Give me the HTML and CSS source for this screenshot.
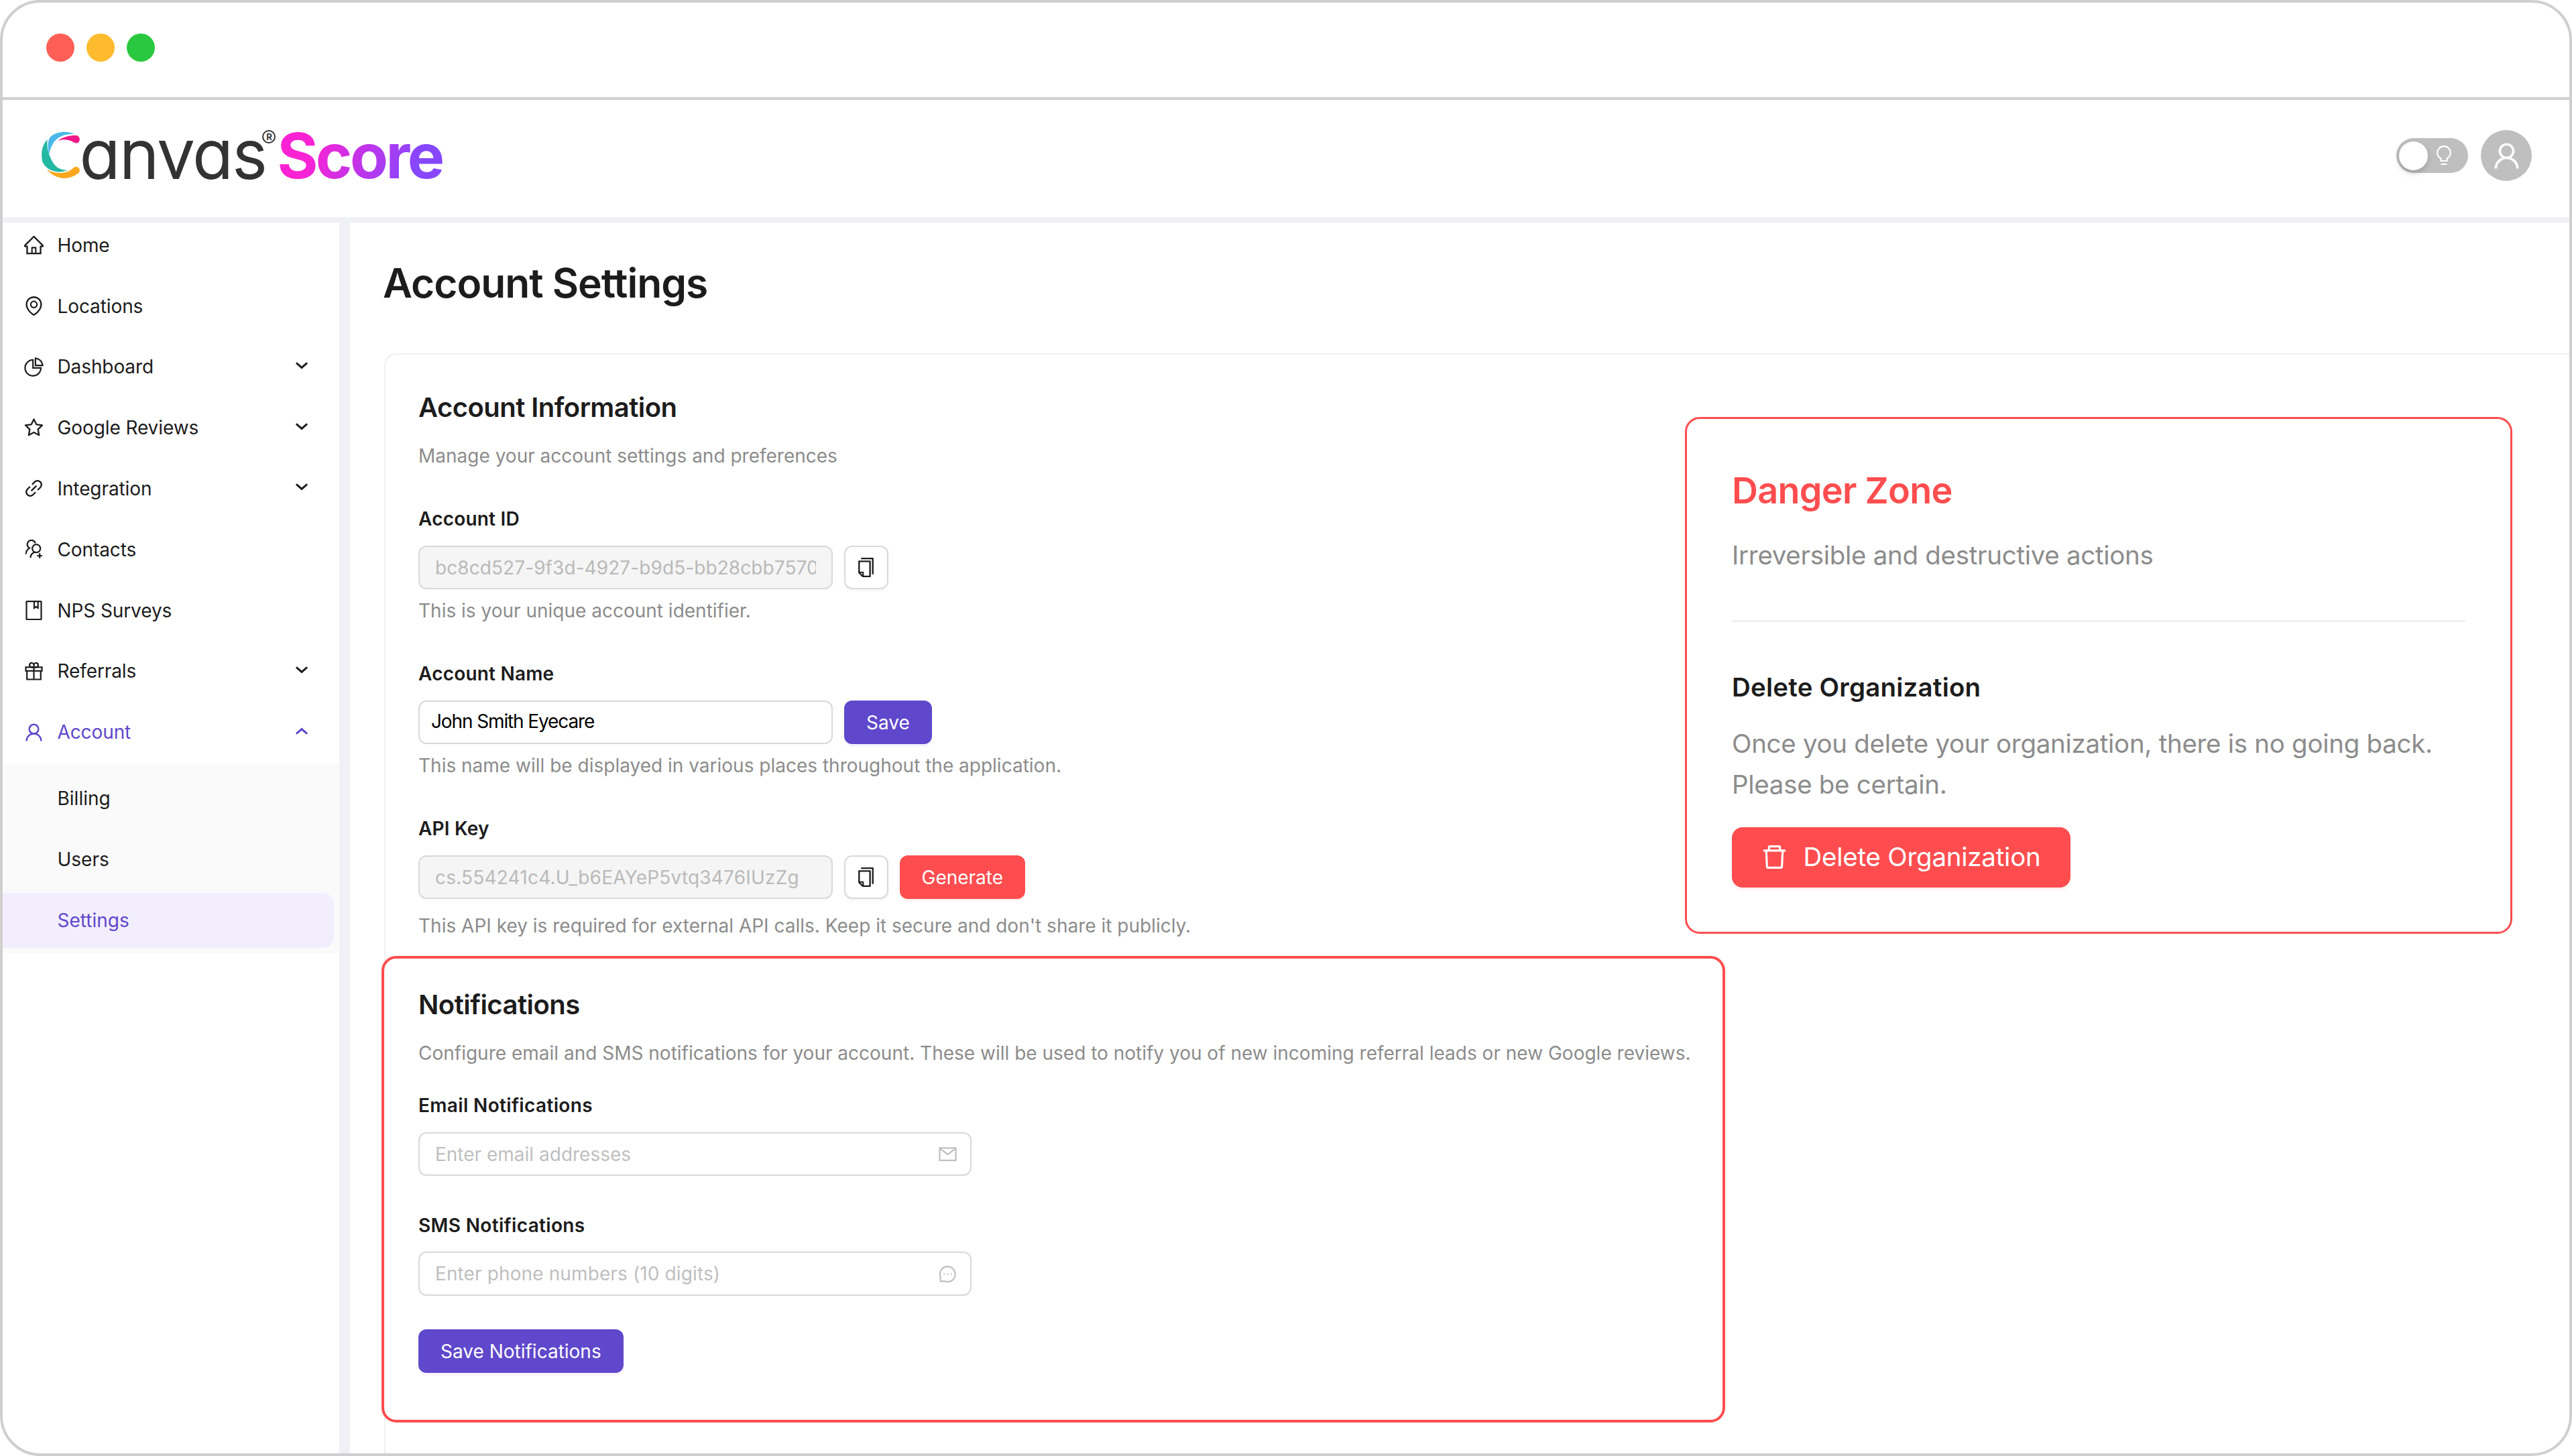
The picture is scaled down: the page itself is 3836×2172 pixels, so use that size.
FILE: index.html
```html
<!DOCTYPE html>
<html lang="en">
<head>
    <meta charset="UTF-8">
    <meta name="viewport" content="width=device-width, initial-scale=1.0">
    <title>Account Settings - Canvas Score</title>
    <link rel="stylesheet" href="styles.css">
</head>
<body>
    <!-- Shared icons -->
    <svg class="sprite" aria-hidden="true">
        <symbol id="i-user" viewBox="64 64 896 896"><path d="M858.5 763.6a374 374 0 0 0-80.6-119.5 375.63 375.63 0 0 0-119.5-80.6c-.4-.2-.8-.3-1.2-.5C719.5 518 760 444.7 760 362c0-137-111-248-248-248S264 225 264 362c0 82.7 40.5 156 102.8 201.1-.4.2-.8.3-1.2.5-44.8 18.9-85 46-119.5 80.6a375.63 375.63 0 0 0-80.6 119.5A371.7 371.7 0 0 0 136 901.8a8 8 0 0 0 8 8.2h60c4.4 0 7.9-3.5 8-7.8 2-77.2 33-149.5 87.8-204.3 56.7-56.7 132-87.9 212.2-87.9s155.5 31.2 212.2 87.9C779 752.7 810 825 812 902.2c.1 4.4 3.6 7.8 8 7.8h60a8 8 0 0 0 8-8.2c-1-47.8-10.9-94.3-29.5-138.2zM512 534c-45.9 0-89.1-17.9-121.6-50.4S340 407.9 340 362c0-45.9 17.9-89.1 50.4-121.6S466.1 190 512 190s89.1 17.9 121.6 50.4S684 316.1 684 362c0 45.9-17.9 89.1-50.4 121.6S557.9 534 512 534z"/></symbol>
        <symbol id="i-copy" viewBox="64 64 896 896"><path d="M832 64H296c-4.400 0-8 3.600-8 8v56c0 4.400 3.600 8 8 8h496v688c0 4.400 3.600 8 8 8h56c4.400 0 8-3.600 8-8V96c0-17.700-14.300-32-32-32zM704 192H192c-17.700 0-32 14.300-32 32v530.700c0 8.500 3.400 16.600 9.400 22.600l173.300 173.300c2.200 2.200 4.700 4 7.400 5.500v1.900h4.200c3.500 1.300 7.200 2 11 2H704c17.700 0 32-14.300 32-32V224c0-17.700-14.300-32-32-32zM350 856.200L263.900 770H350v86.200zM664 888H414V746c0-22.100-17.900-40-40-40H232V264h432v624z"/></symbol>
        <symbol id="i-arrow" viewBox="0 0 18 11"><path d="M1.800 2.200 9 8.400 16.200 2.200" fill="none" stroke="currentColor" stroke-width="3" stroke-linecap="round"/></symbol>
    </svg>

    <div class="window">
        <div class="titlebar">
            <span class="dot red"></span>
            <span class="dot yellow"></span>
            <span class="dot green"></span>
        </div>

        <header class="header">
            <div class="logo">
                <svg class="logo-c" viewBox="36 50 169 208">
                    <path fill="#4ab8ea" d="M68 150C62 112 63 88 76 73C102 50 150 45 182 62C130 58 82 80 70 150z"/>
                    <path fill="#ee1889" d="M108 92C130 72 170 66 192 68C206 72 208 90 200 98C190 106 180 100 170 94C150 84 130 84 108 92z"/>
                    <path fill="#22b8a2" d="M62 86C32 116 34 160 40 185C58 225 110 240 150 222C112 220 92 205 77 170C64 145 58 115 62 86z"/>
                    <path fill="#fba61c" d="M58 218C90 238 130 238 155 227C175 218 178 206 190 207C206 210 208 226 200 234C180 250 160 256 138 258C108 257 80 244 58 218z"/>
                </svg>
                <span class="logo-canvas">anvas</span>
                <span class="logo-reg">R</span>
                <span class="logo-score">Score</span>
            </div>
            <div class="header-tools">
                <div class="switch">
                    <span class="knob"></span>
                    <svg class="bulb line" viewBox="0 0 22 30">
                        <path d="M6.500 23V19.500C3 17.500 1.200 14.500 1.200 11a9.800 9.800 0 0 1 19.600 0C20.800 14.500 19 17.500 15.500 19.500V23z"/>
                        <path d="M6.500 28h9"/>
                    </svg>
                </div>
                <div class="avatar"><svg><use href="#i-user"/></svg></div>
            </div>
        </header>

        <div class="layout">
            <nav class="sidebar">
                <a class="item">
                    <svg class="icon" viewBox="64 64 896 896"><path d="M946.500 505L560.100 118.800l-25.900-25.900a31.500 31.500 0 0 0-44.400 0L77.500 505a63.900 63.900 0 0 0-18.800 46c.4 35.200 29.700 63.300 64.900 63.300h42.500V940h691.800V614.300h43.400c17.100 0 33.200-6.700 45.300-18.800a63.600 63.600 0 0 0 18.700-45.300c0-17-6.700-33.100-18.800-45.200zM568 868H456V664h112v204zm217.900-325.700V868H632V640c0-22.100-17.900-40-40-40H432c-22.100 0-40 17.900-40 40v228H238.100V542.300h-96l370-369.700 23.100 23.100L882 542.300h-96.100z"/></svg>
                    <span>Home</span>
                </a>
                <a class="item">
                    <svg class="icon" viewBox="64 64 896 896"><path d="M854.600 289.100a362.490 362.490 0 0 0-79.900-115.700 370.830 370.830 0 0 0-118.200-77.800C610.700 76.600 562.100 67 512 67c-50.100 0-98.700 9.600-144.500 28.500-44.300 18.300-84 44.500-118.200 77.800A363.600 363.600 0 0 0 169.400 289c-19.500 45-29.400 92.800-29.400 142 0 70.600 16.900 140.900 50.100 208.700 26.700 54.500 64 107.600 111 158.100 80.300 86.200 164.500 138.900 188.400 153a43.900 43.900 0 0 0 22.400 6.100c7.800 0 15.500-2 22.400-6.100 23.900-14.100 108.100-66.800 188.400-153 47-50.400 84.300-103.600 111-158.100C867.100 572 884 501.800 884 431.100c0-49.200-9.900-97-29.400-142zM512 880.200c-65.900-41.900-300-207.800-300-449.100 0-77.900 31.100-151.100 87.600-206.300C356.300 169.500 431.700 139 512 139s155.700 30.500 212.400 85.900C780.900 280 812 353.200 812 431.100c0 241.300-234.100 407.200-300 449.100zm0-617.200c-97.200 0-176 78.800-176 176s78.800 176 176 176 176-78.800 176-176-78.800-176-176-176zm79.200 255.200A111.600 111.600 0 0 1 512 551c-29.900 0-58-11.700-79.200-32.800A111.600 111.600 0 0 1 400 439c0-29.900 11.700-58 32.800-79.200C454 338.600 482.100 327 512 327c29.900 0 58 11.600 79.200 32.800C612.400 381 624 409.100 624 439c0 29.900-11.600 58-32.800 79.200z"/></svg>
                    <span>Locations</span>
                </a>
                <a class="item">
                    <svg class="icon" viewBox="64 64 896 896"><path d="M864 518H506V160c0-4.400-3.600-8-8-8h-26a398.460 398.460 0 0 0-282.800 117.100 398.190 398.190 0 0 0-85.700 127.100A397.610 397.610 0 0 0 72 552a398.460 398.460 0 0 0 117.100 282.800c36.700 36.700 79.500 65.600 127.100 85.700A397.610 397.610 0 0 0 472 952a398.460 398.460 0 0 0 282.800-117.100c36.700-36.700 65.600-79.500 85.700-127.100A397.610 397.610 0 0 0 872 552v-26c0-4.400-3.600-8-8-8zM705.700 787.800A331.590 331.590 0 0 1 470.400 884c-88.100-.4-170.900-34.900-233.200-97.200C174.500 724.100 140 640.700 140 552c0-88.700 34.500-172.100 97.200-234.800 54.600-54.600 124.900-87.900 200.800-95.500V586h364.300c-7.700 76.300-41.300 147-96.600 201.800zM952 462.400l-2.600-28.200c-8.500-92.100-49.400-179-115.200-244.600A399.400 399.400 0 0 0 589 74.600L560.700 72c-4.700-.4-8.700 3.200-8.700 7.900V464c0 4.400 3.600 8 8 8l384-1c4.700 0 8.400-4 8-8.600zm-332.200-58.200V147.600a332.240 332.240 0 0 1 166.400 89.800c45.700 45.600 77 103.600 90 166.100l-256.400.7z"/></svg>
                    <span>Dashboard</span>
                    <svg class="arrow"><use href="#i-arrow"/></svg>
                </a>
                <a class="item">
                    <svg class="icon" viewBox="64 64 896 896"><path d="M908.100 353.100l-253.900-36.900L540.700 86.100c-3.100-6.300-8.200-11.400-14.500-14.500-15.800-7.800-35-1.300-42.900 14.500L369.800 316.200l-253.900 36.900c-7 1-13.400 4.300-18.300 9.300a32.050 32.050 0 0 0 .6 45.300l183.700 179.100-43.400 252.900a31.950 31.950 0 0 0 46.400 33.700L512 754l227.100 119.400c6.200 3.300 13.400 4.400 20.300 3.200 17.400-3 29.100-19.500 26.100-36.900l-43.400-252.900 183.700-179.100c5-4.900 8.300-11.300 9.300-18.300 2.700-17.500-9.500-33.700-27-36.300zM664.800 561.600l36.100 210.300L512 672.700 323.100 772l36.100-210.300-152.800-149L417.600 382 512 190.700 606.400 382l211.200 30.700-152.800 148.900z"/></svg>
                    <span>Google Reviews</span>
                    <svg class="arrow"><use href="#i-arrow"/></svg>
                </a>
                <a class="item">
                    <svg class="icon" viewBox="64 64 896 896"><path d="M574 665.400a8.030 8.030 0 0 0-11.300 0L446.500 781.600c-53.800 53.800-144.600 59.500-204 0-59.500-59.500-53.800-150.200 0-204l116.200-116.200c3.100-3.100 3.100-8.200 0-11.300l-39.800-39.800a8.030 8.030 0 0 0-11.300 0L191.400 526.500c-84.600 84.600-84.600 221.500 0 306s221.500 84.600 306 0l116.200-116.200c3.100-3.100 3.100-8.200 0-11.300L574 665.400zm258.600-474c-84.600-84.600-221.500-84.600-306 0L410.300 307.600a8.030 8.030 0 0 0 0 11.300l39.700 39.700c3.100 3.100 8.200 3.100 11.300 0l116.200-116.200c53.800-53.800 144.600-59.500 204 0 59.500 59.500 53.800 150.200 0 204L665.300 562.600a8.030 8.030 0 0 0 0 11.300l39.800 39.800c3.100 3.100 8.200 3.100 11.300 0l116.200-116.200c84.500-84.600 84.500-221.500 0-306.100zM610.100 372.300a8.030 8.030 0 0 0-11.300 0L372.300 598.700a8.030 8.030 0 0 0 0 11.300l39.600 39.600c3.100 3.100 8.200 3.100 11.300 0l226.400-226.400c3.100-3.100 3.100-8.200 0-11.300l-39.500-39.600z"/></svg>
                    <span>Integration</span>
                    <svg class="arrow"><use href="#i-arrow"/></svg>
                </a>
                <a class="item">
                    <svg class="icon line" viewBox="0 0 29 29">
                        <path d="M16.800 5.200A6.200 6.200 0 1 0 8 12.600C4.800 14.300 2.900 17.200 2.700 21.500"/>
                        <circle cx="18.200" cy="13.200" r="6"/>
                        <path d="M16 18.800C12 20 9.600 23 9.400 27"/>
                        <path d="M19.300 24h7.700M23.200 20.200v7.600"/>
                    </svg>
                    <span>Contacts</span>
                </a>
                <a class="item">
                    <svg class="icon line" viewBox="0 0 29 29">
                        <rect x="3.500" y="1.200" width="22" height="26.800" rx="0.600"/>
                        <path d="M15 1.500V11l2.800-2 2.900 2V1.500"/>
                    </svg>
                    <span>NPS Surveys</span>
                </a>
                <a class="item">
                    <svg class="icon line" viewBox="0 0 29 29">
                        <rect x="2.500" y="8.300" width="24" height="5.500"/>
                        <path d="M4.200 13.800V26.500h20.600V13.800M14.500 8.300v18.200"/>
                        <path d="M14.500 8.300H10.600a3.200 3.200 0 1 1 3.900-3.100zM14.500 8.300h3.900a3.200 3.200 0 1 0-3.900-3.100z"/>
                    </svg>
                    <span>Referrals</span>
                    <svg class="arrow"><use href="#i-arrow"/></svg>
                </a>
                <a class="item open">
                    <svg class="icon"><use href="#i-user"/></svg>
                    <span>Account</span>
                    <svg class="arrow"><use href="#i-arrow"/></svg>
                </a>
                <div class="submenu">
                    <a class="subitem">Billing</a>
                    <a class="subitem">Users</a>
                    <a class="subitem active">Settings</a>
                </div>
            </nav>

            <main class="main">
                <h1>Account Settings</h1>

                <div class="card">
                    <div class="card-top">
                        <section class="info">
                            <h2>Account Information</h2>
                            <p class="desc">Manage your account settings and preferences</p>

                            <div class="field">
                                <label>Account ID</label>
                                <div class="row">
                                    <input class="input" type="text" value="bc8cd527-9f3d-4927-b9d5-bb28cbb7570a" disabled>
                                    <button class="btn copy"><svg><use href="#i-copy"/></svg></button>
                                </div>
                                <p class="help">This is your unique account identifier.</p>
                            </div>

                            <div class="field">
                                <label>Account Name</label>
                                <div class="row">
                                    <input class="input name" type="text" value="John Smith Eyecare">
                                    <button class="btn primary">Save</button>
                                </div>
                                <p class="help">This name will be displayed in various places throughout the application.</p>
                            </div>

                            <div class="field api">
                                <label>API Key</label>
                                <div class="row">
                                    <input class="input key" type="text" value="cs.554241c4.U_b6EAYeP5vtq3476IUzZg" disabled>
                                    <button class="btn copy"><svg><use href="#i-copy"/></svg></button>
                                    <button class="btn danger">Generate</button>
                                </div>
                                <p class="help">This API key is required for external API calls. Keep it secure and don't share it publicly.</p>
                            </div>
                        </section>

                        <section class="danger-zone">
                            <h2>Danger Zone</h2>
                            <p>Irreversible and destructive actions</p>
                            <hr>
                            <h3>Delete Organization</h3>
                            <p>Once you delete your organization, there is no going back. Please be certain.</p>
                            <button class="btn danger delete">
                                <svg viewBox="64 64 896 896"><path d="M360 184h-8c4.400 0 8-3.600 8-8v8h304v-8c0 4.400 3.600 8 8 8h-8v72h72v-80c0-35.300-28.700-64-64-64H352c-35.300 0-64 28.700-64 64v80h72v-72zm504 72H160c-17.700 0-32 14.300-32 32v32c0 4.400 3.600 8 8 8h60.400l24.700 523c1.600 34.100 29.800 61 63.900 61h454c34.200 0 62.300-26.800 63.900-61l24.700-523H888c4.400 0 8-3.600 8-8v-32c0-17.700-14.300-32-32-32zM731.300 840H292.700l-24.200-512h487l-24.200 512z"/></svg>
                                <span>Delete Organization</span>
                            </button>
                        </section>
                    </div>

                    <section class="notifications">
                        <h2>Notifications</h2>
                        <p class="desc">Configure email and SMS notifications for your account. These will be used to notify you of new incoming referral leads or new Google reviews.</p>

                        <label>Email Notifications</label>
                        <div class="input wide">
                            <input type="text" placeholder="Enter email addresses">
                            <svg class="line" viewBox="0 0 29 29">
                                <rect x="2.500" y="5.500" width="24" height="18.500"/>
                                <path d="M3 6.500l11.500 8.700L26 6.500"/>
                            </svg>
                        </div>

                        <label>SMS Notifications</label>
                        <div class="input wide">
                            <input type="text" class="phone" placeholder="Enter phone numbers (10 digits)">
                            <svg class="line" viewBox="0 0 29 29">
                                <path d="M3.800 25.500V19.300A11.400 11.400 0 1 1 9.700 25.200z"/>
                                <path d="M8.200 14.500h2M13.500 14.500h2M18.800 14.500h2"/>
                            </svg>
                        </div>

                        <button class="btn primary">Save Notifications</button>
                    </section>
                </div>
            </main>
        </div>
    </div>
</body>
</html>
```
FILE: styles.css
```css
* {
    box-sizing: border-box;
}
body {
    margin: 0;
    background-color: #fff;
    font-family: Inter, "Liberation Sans", sans-serif;
    font-size: 28px;
    line-height: 44px;
    color: #1c1c1c;
}
h1, h2, h3, p {
    margin: 0;
}
h1, h2, h3, label {
    font-weight: 600;
}
svg {
    fill: currentColor;
    flex: none;
}
input, button {
    font: inherit;
    color: inherit;
}
.sprite {
    display: none;
}
.line {
    fill: none;
    stroke: currentColor;
    stroke-width: 2.2;
}
.window {
    display: flex;
    flex-direction: column;
    width: 100vw;
    height: 100vh;
    border: 4px solid #cfcfcf;
    border-radius: 60px;
    overflow: hidden;
}

/* Title bar */
.titlebar {
    flex: none;
    display: flex;
    gap: 18px;
    height: 145px;
    padding: 46px 65px;
    border-bottom: 4px solid #cfcfcf;
}
.dot {
    width: 42px;
    height: 42px;
    border-radius: 50%;
}
.red {
    background-color: #ff5f57;
}
.yellow {
    background-color: #febb2e;
}
.green {
    background-color: #2ac840;
}

/* Header */
.header {
    flex: none;
    display: flex;
    justify-content: space-between;
    height: 183px;
    padding: 0 56px 0 58px;
    border-bottom: 8px solid #f0f1f6;
}
.logo {
    display: flex;
    align-items: baseline;
    padding-top: 31px;
}
.logo-c {
    width: 57px;
    height: 70px;
}
.logo-canvas {
    font-size: 100px;
    font-weight: 300;
    line-height: 100px;
    letter-spacing: -0.9px;
    font-feature-settings: "cv11";
    color: #333;
    -webkit-text-stroke: 2px #333;
}
.logo-reg {
    align-self: flex-start;
    width: 20px;
    height: 20px;
    margin: 14px 2px 0 -6px;
    border: 2px solid #333;
    border-radius: 50%;
    font-size: 13px;
    font-weight: 700;
    line-height: 16px;
    text-align: center;
    color: #333;
}
.logo-score {
    font-size: 93px;
    font-weight: 700;
    line-height: 93px;
    letter-spacing: -3.5px;
    color: transparent;
    background: linear-gradient(110deg, #fb22d4 22%, #8647ff 82%);
    -webkit-background-clip: text;
    background-clip: text;
}
.header-tools {
    display: flex;
    align-items: center;
    gap: 19px;
    padding-bottom: 9px;
}
.switch {
    display: flex;
    align-items: center;
    gap: 13px;
    width: 107px;
    height: 52px;
    padding: 0 4px;
    border-radius: 26px;
    background-color: #bfbfbf;
}
.knob {
    width: 43px;
    height: 43px;
    border-radius: 50%;
    background-color: #fff;
    box-shadow: 0 4px 8px rgba(0, 35, 11, 0.2);
}
.bulb {
    width: 22px;
    height: 30px;
    color: #fff;
}
.avatar {
    display: flex;
    align-items: center;
    justify-content: center;
    width: 76px;
    height: 76px;
    border-radius: 50%;
    background-color: #bfbfbf;
    color: #fff;
}
.avatar svg {
    width: 43px;
    height: 43px;
}

/* Sidebar */
.layout {
    flex: 1;
    display: flex;
    min-height: 0;
}
.sidebar {
    flex: none;
    width: 518px;
    border-right: 16px solid #f0f1f6;
}
.item {
    display: flex;
    align-items: center;
    height: 90.8px;
    padding: 0 47px 0 32px;
    letter-spacing: -0.1px;
}
.item:first-child {
    height: 79.2px;
    padding-bottom: 11.6px;
}
.item .icon {
    width: 29px;
    height: 29px;
    margin-right: 20.5px;
}
.arrow {
    width: 18px;
    height: 11px;
    margin: -4px 0 0 auto;
}
.open, .active {
    color: #5f48cb;
}
.open .arrow {
    transform: rotate(180deg);
}
.submenu {
    margin-top: 3px;
    padding: 9px 8px 8px 0;
    background-color: #fafafa;
}
.subitem {
    display: block;
    height: 82px;
    margin-bottom: 9px;
    padding-left: 81.5px;
    line-height: 82px;
}
.subitem:last-child {
    margin-bottom: 0;
}
.active {
    border-radius: 0 16px 16px 0;
    background-color: #f3eefe;
}

/* Content */
.main {
    flex: 1;
    min-width: 0;
    padding: 50px 0 0 51px;
}
h1 {
    margin-left: -2px;
    font-size: 60.5px;
    line-height: 80px;
    letter-spacing: -1.05px;
}
.card {
    height: 1700px;
    margin-top: 65px;
    padding: 49px 0 0 49px;
    border: 2px solid #f0f0f0;
    border-right: 0;
    border-radius: 18px 0 0 0;
}
.card-top {
    display: flex;
    justify-content: space-between;
    align-items: flex-start;
}
h2 {
    font-size: 40px;
    line-height: 60px;
    letter-spacing: -0.54px;
}
.desc {
    margin-top: 20px;
    color: #8c8c8c;
    white-space: nowrap;
}
label {
    display: block;
    letter-spacing: 0.2px;
}
.field {
    margin-top: 50.3px;
}
.row {
    display: flex;
    gap: 17px;
    margin: 17.5px 0 9.7px;
}
.api .row {
    margin-bottom: 18px;
}
.help {
    color: #8c8c8c;
}
.input {
    width: 618px;
    height: 65.5px;
    padding: 0 23px;
    border: 2px solid #d9d9d9;
    border-radius: 12px;
    background-color: #fff;
}
.input:disabled {
    background-color: #f5f5f5;
    color: #bababa;
    letter-spacing: 0.08px;
}
.input.key:disabled {
    letter-spacing: 0.2px;
}
.input.name {
    padding: 0 17px 3px;
    color: #000;
    letter-spacing: -1.12px;
}
.btn {
    display: flex;
    align-items: center;
    justify-content: center;
    height: 65.5px;
    padding: 0 33px;
    border: 0;
    border-radius: 12px;
}
.primary {
    background-color: #5f48cb;
    color: #fff;
    box-shadow: 0 4px 0 rgba(114, 46, 209, 0.06);
}
.danger {
    background-color: #ff4d4f;
    color: #fff;
    box-shadow: 0 4px 0 rgba(255, 38, 5, 0.06);
}
.copy {
    width: 65.5px;
    padding: 0;
    border: 2px solid #d9d9d9;
    background-color: #fff;
    box-shadow: 0 4px 0 rgba(0, 0, 0, 0.02);
}
.copy svg {
    width: 29px;
    height: 29px;
}

/* Danger zone */
.danger-zone {
    width: 1234px;
    height: 771px;
    margin: 44px 85px 0 0;
    padding: 67px;
    border: 3px solid #ff4d4f;
    border-radius: 22px;
    font-size: 38.5px;
    line-height: 61px;
    background-color: #fff;
}
.danger-zone h2 {
    margin-bottom: 26px;
    font-size: 54px;
    line-height: 80px;
    letter-spacing: -0.75px;
    color: #ff4d4f;
}
.danger-zone p {
    color: #8c8c8c;
    letter-spacing: -0.3px;
}
.danger-zone hr {
    height: 3px;
    margin: 66px 0 67px;
    border: 0;
    background-color: #f0f0f0;
}
.danger-zone h3 {
    margin-bottom: 23px;
    font-size: 38.5px;
    letter-spacing: 0.2px;
}
.delete {
    gap: 24px;
    height: 89.5px;
    margin-top: 33px;
    padding: 0 45px 0 43.5px;
    border-radius: 16px;
    letter-spacing: -0.25px;
}
.delete svg {
    width: 39px;
    height: 39px;
}

/* Notifications */
.notifications {
    width: 2004px;
    height: 696px;
    margin: 23px 0 0 -55px;
    padding: 39px 51px;
    border: 4px solid #ff4d4f;
    border-radius: 22px;
    background-color: #fff;
}
.notifications label {
    margin: 51.5px 0 17.5px;
    letter-spacing: 0.35px;
}
.notifications .desc + label {
    margin-top: 34px;
}
.wide {
    display: flex;
    align-items: center;
    width: 825px;
    padding-right: 19px;
}
.wide input {
    flex: 1;
    padding: 0;
    border: 0;
    outline: 0;
    background: none;
}
.wide input::placeholder {
    color: #bfbfbf;
}
.wide .phone {
    letter-spacing: 0.12px;
}
.wide svg {
    width: 29px;
    height: 29px;
    color: #bfbfbf;
}
.notifications .btn {
    margin-top: 50px;
}
```
